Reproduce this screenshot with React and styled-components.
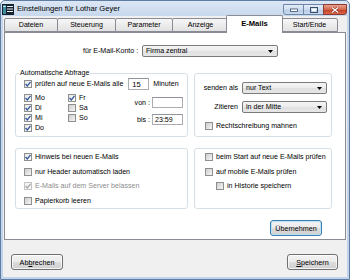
import React from "react";
import styled, { createGlobalStyle } from "styled-components";

const GlobalStyle = createGlobalStyle`
  html, body {
    margin: 0;
    padding: 0;
    background: #fff;
  }
  body {
    width: 350px;
    height: 280px;
    overflow: hidden;
    font-family: "Liberation Sans", Arial, sans-serif;
    font-size: 7.1px;
    color: #000;
  }
  * {
    box-sizing: border-box;
  }
`;

const Window = styled.div`
  width: 350px;
  height: 280px;
  display: flex;
  flex-direction: column;
  background: linear-gradient(#dce7f5, #c6d7ec 16px, #c1d3ea);
  border: 1px solid #5f7ca3;
  border-radius: 5px 5px 0 0;
  overflow: hidden;
`;

const TitleBar = styled.div`
  height: 15px;
  flex: none;
  display: flex;
  align-items: center;
  padding: 0 2px 0 1px;
`;

const AppIcon = styled.svg`
  flex: none;
  margin-top: 1px;
`;

const Title = styled.div`
  margin-left: 3px;
  font-size: 7.6px;
  color: #000;
  white-space: nowrap;
  flex: 1;
`;

const Controls = styled.div`
  align-self: flex-start;
  margin-top: 3px;
  display: flex;
`;

const CaptionButton = styled.div`
  width: ${({ $w }) => $w}px;
  height: 11px;
  display: grid;
  place-items: center;
  border: 1px solid ${({ $close }) => ($close ? "#8a3a30" : "#6f86a6")};
  margin-left: -1px;
  border-radius: ${({ $first, $close }) =>
    $first ? "0 0 0 3px" : $close ? "0 0 3px 0" : "0"};
  background: ${({ $close }) =>
    $close
      ? "linear-gradient(#e8a38f, #d2664b 50%, #c13d21 51%, #d8664a)"
      : "linear-gradient(#e3ecf7, #cddcee 50%, #b9cce5 51%, #c9daee)"};
`;

const Client = styled.div`
  flex: 1;
  margin: 0 2px 2px;
  padding: 0 1px;
  background: #f0f0f0;
  display: flex;
  flex-direction: column;
`;

const TabStrip = styled.div`
  height: 16px;
  flex: none;
  display: flex;
  align-items: flex-end;
`;

const Tab = styled.div`
  width: ${({ $w }) => $w}px;
  flex: none;
  height: ${({ $active }) => ($active ? 18 : 14)}px;
  margin: ${({ $active }) => ($active ? "0 -2px -1px" : "0")};
  position: relative;
  z-index: ${({ $active }) => ($active ? 2 : 1)};
  display: flex;
  align-items: center;
  justify-content: center;
  padding-bottom: ${({ $active }) => ($active ? 2 : 0)}px;
  border: 1px solid #898c95;
  border-bottom: ${({ $active }) => ($active ? "none" : "1px solid #898c95")};
  margin-right: ${({ $active }) => ($active ? -2 : -1)}px;
  border-radius: 2px 2px 0 0;
  background: ${({ $active }) =>
    $active ? "#fff" : "linear-gradient(#f6f6f6, #ececec 50%, #e2e2e2)"};
  font-size: ${({ $active }) => ($active ? 7.6 : 7.1)}px;
  font-weight: ${({ $active }) => ($active ? "bold" : "normal")};
  white-space: nowrap;
`;

const Panel = styled.div`
  height: 208px;
  flex: none;
  border: 1px solid #898c95;
  background: #fff;
  display: flex;
  flex-direction: column;
`;

const AccountRow = styled.div`
  margin-top: 12px;
  height: 12px;
  display: flex;
  align-items: center;
  padding-left: 78px;
`;

const RightLabel = styled.div`
  width: ${({ $w }) => $w}px;
  text-align: right;
  white-space: nowrap;
  flex: none;
`;

const ComboBox = styled.div`
  width: ${({ $w }) => $w}px;
  height: 12px;
  flex: none;
  margin-left: ${({ $gap }) => $gap || 0}px;
  display: flex;
  align-items: center;
  justify-content: space-between;
  padding: 0 4px 0 3px;
  border: 1px solid #7b7b7b;
  border-radius: 2px;
  background: linear-gradient(#f4f4f4, #ececec 50%, #e0e0e0 51%, #e6e6e6);
  white-space: nowrap;
`;

const GroupGrid = styled.div`
  margin: 16px 0 0 10px;
  display: grid;
  grid-template-columns: 173px 138px;
  grid-template-rows: 64px 61px;
  column-gap: 6px;
  row-gap: 11px;
`;

const GroupBox = styled.div`
  position: relative;
  border: 1px solid #d5dfe5;
  border-radius: 3px;
  padding: ${({ $pad }) => $pad};
  display: flex;
  flex-direction: column;
`;

const Caption = styled.span`
  position: absolute;
  top: -5px;
  left: 3px;
  padding: 0 1px;
  line-height: 9px;
  background: #fff;
  white-space: nowrap;
`;

const Row = styled.div`
  display: flex;
  align-items: center;
  height: ${({ $h }) => $h || 10}px;
  margin-top: ${({ $mt }) => $mt || 0}px;
  margin-left: ${({ $ml }) => $ml || 0}px;
`;

const Option = styled.label`
  display: flex;
  align-items: center;
  gap: 3px;
  height: 10px;
  white-space: nowrap;
  color: ${({ $disabled }) => ($disabled ? "#8d8d8d" : "#000")};
  margin-left: ${({ $indent }) => $indent || 0}px;
`;

const Box = styled.span`
  width: 8px;
  height: 8px;
  flex: none;
  display: grid;
  place-items: center;
  border: 1px solid ${({ $disabled }) => ($disabled ? "#c4c4c4" : "#8e8f8f")};
  background: ${({ $checked, $disabled }) =>
    $disabled
      ? "#f4f4f4"
      : $checked
      ? "linear-gradient(135deg, #e9e9e9, #fbfbfb)"
      : "linear-gradient(135deg, #cdcdcd, #f6f6f6)"};
`;

const TextField = styled.div`
  width: ${({ $w }) => $w}px;
  height: ${({ $h }) => $h || 12}px;
  flex: none;
  margin-left: ${({ $ml }) => $ml || 0}px;
  border: 1px solid #abadb3;
  border-top-color: #8f939c;
  background: #fff;
  display: flex;
  align-items: center;
  padding-left: ${({ $pl }) => $pl || 2}px;
  font-size: ${({ $fs }) => $fs || 7.1}px;
`;

const Suffix = styled.span`
  margin-left: 4px;
`;

const DaysGrid = styled.div`
  display: grid;
  grid-template-columns: 44px 44px;
  grid-template-rows: repeat(4, 10px);
  grid-auto-flow: column;
  flex: none;
`;

const TimeGrid = styled.div`
  margin: 4px 0 0 2px;
  display: grid;
  grid-template-columns: 36px 31px;
  grid-auto-rows: 11px;
  column-gap: 2px;
  row-gap: 6px;
  align-items: center;
  align-self: flex-start;
`;

const FieldGrid = styled.div`
  display: grid;
  grid-template-columns: 43px 85px;
  grid-auto-rows: 12px;
  column-gap: 4px;
  row-gap: 7px;
  align-items: center;
`;

const Stack = styled.div`
  display: flex;
  flex-direction: column;
  gap: 4.5px;
`;

const ApplyRow = styled.div`
  margin-top: 11px;
  display: flex;
  justify-content: flex-end;
  padding-right: 23px;
`;

const Button = styled.div`
  width: ${({ $w }) => $w}px;
  height: 16px;
  display: flex;
  align-items: center;
  justify-content: center;
  border: 1px solid ${({ $default }) => ($default ? "#3c7fb1" : "#707070")};
  border-radius: 3px;
  background: linear-gradient(#f2f2f2, #ebebeb 50%, #dddddd 51%, #cfcfcf);
  box-shadow: inset 0 0 0 1px
    ${({ $default }) => ($default ? "#bfe1f5" : "rgba(255,255,255,0.75)")};
  font-size: 7.2px;
  white-space: nowrap;

  u {
    text-decoration-thickness: 1px;
    text-underline-offset: 1px;
  }
`;

const Footer = styled.div`
  padding: 14px 8px 0 7px;
  display: flex;
  justify-content: space-between;
`;

const Arrow = () => (
  <svg width="5" height="3" viewBox="0 0 5 3">
    <path d="M0 0 H5 L2.5 3 Z" fill="#000" />
  </svg>
);

const CheckOption = ({ children, checked, disabled, indent }) => (
  <Option $disabled={disabled} $indent={indent}>
    <Box $checked={checked} $disabled={disabled}>
      {checked && (
        <svg width="6" height="6" viewBox="0 0 6 6">
          <path
            d="M0.5 3 L2.3 4.9 L5.5 0.8"
            fill="none"
            stroke={disabled ? "#a8a8a8" : "#35589a"}
            strokeWidth="1.3"
          />
        </svg>
      )}
    </Box>
    {children}
  </Option>
);

const tabs = [
  ["Dateien", 54],
  ["Steuerung", 59],
  ["Parameter", 58],
  ["Anzeige", 57],
  ["E-Mails", 57],
  ["Start/Ende", 57],
];

const days = [
  ["Mo", true],
  ["Di", true],
  ["Mi", true],
  ["Do", true],
  ["Fr", true],
  ["Sa", false],
  ["So", false],
];

export default function App() {
  return (
    <>
      <GlobalStyle />
      <Window>
        <TitleBar>
          <AppIcon width="12" height="11" viewBox="0 0 12 11">
            <rect x="0" y="0" width="12" height="11" fill="#16222e" />
            <rect x="1" y="1" width="3" height="9" fill="#3d8a9a" />
            <rect x="5" y="2" width="6" height="1" fill="#e8eef2" />
            <rect x="5" y="4.5" width="6" height="1" fill="#e8eef2" />
            <rect x="5" y="7" width="6" height="1" fill="#e8eef2" />
            <rect x="1.5" y="2" width="2" height="1" fill="#ffffff" />
          </AppIcon>
          <Title>Einstellungen für Lothar Geyer</Title>
          <Controls>
            <CaptionButton $w={21} $first>
              <svg width="8" height="5" viewBox="0 0 8 5">
                <rect x="0.5" y="2" width="7" height="2.5" fill="#fff" stroke="#3a4f6e" strokeWidth="0.8" />
              </svg>
            </CaptionButton>
            <CaptionButton $w={21}>
              <svg width="8" height="6" viewBox="0 0 8 6">
                <rect x="0.5" y="0.5" width="7" height="5" fill="none" stroke="#3a4f6e" strokeWidth="1" />
                <rect x="2" y="2" width="4" height="2" fill="#fff" />
              </svg>
            </CaptionButton>
            <CaptionButton $w={24} $close>
              <svg width="8" height="6" viewBox="0 0 8 6">
                <path d="M1 0.5 L7 5.5 M7 0.5 L1 5.5" stroke="#7a2a1e" strokeWidth="2.2" />
                <path d="M1 0.5 L7 5.5 M7 0.5 L1 5.5" stroke="#fff" strokeWidth="1.2" />
              </svg>
            </CaptionButton>
          </Controls>
        </TitleBar>

        <Client>
          <TabStrip>
            {tabs.map(([label, w]) => (
              <Tab key={label} $w={w} $active={label === "E-Mails"}>
                {label}
              </Tab>
            ))}
          </TabStrip>

          <Panel>
            <AccountRow>
              <RightLabel $w={55}>für E-Mail-Konto :</RightLabel>
              <ComboBox $w={136} $gap={4}>
                <span>Firma zentral</span>
                <Arrow />
              </ComboBox>
            </AccountRow>

            <GroupGrid>
              <GroupBox $pad="4px 0 0 8px">
                <Caption>Automatische Abfrage</Caption>
                <Row $h={12}>
                  <CheckOption checked>prüfen auf neue E-Mails alle</CheckOption>
                  <TextField $w={21} $ml={5} $pl={3} $fs={7.6}>15</TextField>
                  <Suffix>Minuten</Suffix>
                </Row>
                <Row $h={40} $mt={3}>
                  <DaysGrid>
                    {days.map(([d, c]) => (
                      <CheckOption key={d} checked={c}>
                        {d}
                      </CheckOption>
                    ))}
                  </DaysGrid>
                  <TimeGrid>
                    <RightLabel $w={36}>von :</RightLabel>
                    <TextField $w={31} $h={11} />
                    <RightLabel $w={36}>bis :</RightLabel>
                    <TextField $w={31} $h={11}>23:59</TextField>
                  </TimeGrid>
                </Row>
              </GroupBox>

              <GroupBox $pad="8px 0 0 0">
                <FieldGrid>
                  <RightLabel $w={43}>senden als</RightLabel>
                  <ComboBox $w={85}>
                    <span>nur Text</span>
                    <Arrow />
                  </ComboBox>
                  <RightLabel $w={43}>Zitieren</RightLabel>
                  <ComboBox $w={85}>
                    <span>in der Mitte</span>
                    <Arrow />
                  </ComboBox>
                </FieldGrid>
                <Row $mt={8} $ml={10}>
                  <CheckOption>Rechtschreibung mahnen</CheckOption>
                </Row>
              </GroupBox>

              <GroupBox $pad="3px 0 0 8px">
                <Stack>
                  <CheckOption checked>Hinweis bei neuen E-Mails</CheckOption>
                  <CheckOption>nur Header automatisch laden</CheckOption>
                  <CheckOption checked disabled>
                    E-Mails auf dem Server belassen
                  </CheckOption>
                  <CheckOption>Papierkorb leeren</CheckOption>
                </Stack>
              </GroupBox>

              <GroupBox $pad="3px 0 0 10px">
                <Stack>
                  <CheckOption>beim Start auf neue E-Mails prüfen</CheckOption>
                  <CheckOption>auf mobile E-Mails prüfen</CheckOption>
                  <CheckOption indent={11}>in Historie speichern</CheckOption>
                </Stack>
              </GroupBox>
            </GroupGrid>

            <ApplyRow>
              <Button $w={52} $default>
                Übernehmen
              </Button>
            </ApplyRow>
          </Panel>

          <Footer>
            <Button $w={52}>
              <span>
                Ab<u>b</u>rechen
              </span>
            </Button>
            <Button $w={51}>
              <span>
                <u>S</u>peichern
              </span>
            </Button>
          </Footer>
        </Client>
      </Window>
    </>
  );
}
